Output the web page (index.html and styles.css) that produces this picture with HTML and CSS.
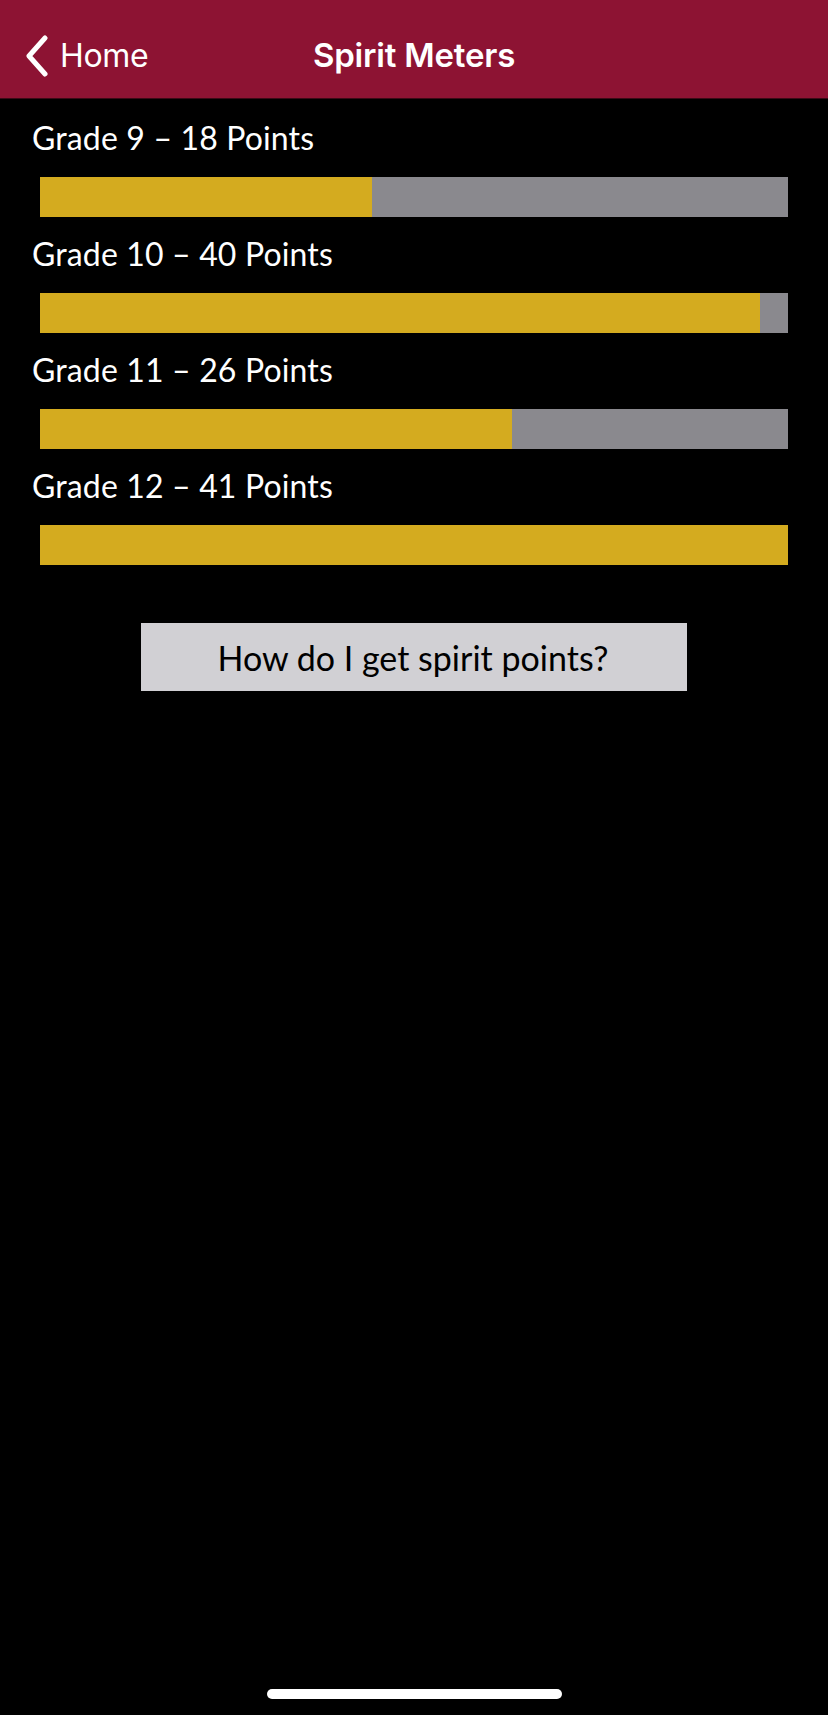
FILE: index.html
```html
<!DOCTYPE html>
<html>
<head>
<meta charset="utf-8">
<title>Spirit Meters</title>
<link rel="stylesheet" href="styles.css">
</head>
<body>
<div class="screen">
  <header class="navbar">
    <a class="back">
      <svg class="chev" width="26" height="42" viewBox="0 0 26 42"><path d="M21 3 L5 21 L21 39" fill="none" stroke="#fff" stroke-width="5" stroke-linecap="round" stroke-linejoin="round"/></svg>
      <span class="back-text">Home</span>
    </a>
    <h1 class="title">Spirit Meters</h1>
  </header>
  <main class="meters">
    <div class="meter">
      <div class="label">Grade 9 – 18 Points</div>
      <div class="bar"><div class="fill" style="width:44.4%"></div></div>
    </div>
    <div class="meter">
      <div class="label">Grade 10 – 40 Points</div>
      <div class="bar"><div class="fill" style="width:96.3%"></div></div>
    </div>
    <div class="meter">
      <div class="label">Grade 11 – 26 Points</div>
      <div class="bar"><div class="fill" style="width:63.1%"></div></div>
    </div>
    <div class="meter">
      <div class="label">Grade 12 – 41 Points</div>
      <div class="bar"><div class="fill" style="width:100%"></div></div>
    </div>
    <div class="actions">
      <button class="help">How do I get spirit points?</button>
    </div>
  </main>
  <div class="home-indicator"></div>
</div>
</body>
</html>
```
FILE: styles.css
```css
* { box-sizing: border-box; }
html, body { margin: 0; padding: 0; background: #000; }
body { width: 828px; height: 1715px; overflow: hidden; }
.screen {
  position: relative;
  width: 828px;
  height: 1715px;
  background: #000;
  display: flex;
  flex-direction: column;
}
.navbar {
  position: relative;
  height: 99px;
  background: #8d1333;
  border-bottom: 1px solid #3a0a16;
  display: flex;
  align-items: center;
  padding-top: 12px;
  flex-shrink: 0;
}
.back {
  display: flex;
  align-items: center;
  gap: 10px;
  padding-left: 24px;
  color: #fff;
}
.chev { display: block; margin-top: 2px; }
.back-text {
  font-family: Inter, "Liberation Sans", sans-serif;
  font-size: 32px;
  font-weight: 400;
  color: #fff;
  letter-spacing: -0.3px;
}
.title {
  position: absolute;
  left: 0;
  right: 0;
  top: 12px;
  bottom: 0;
  margin: 0;
  display: flex;
  align-items: center;
  justify-content: center;
  font-family: Inter, "Liberation Sans", sans-serif;
  font-size: 33px;
  font-weight: 600;
  color: #fff;
  letter-spacing: -0.2px;
  pointer-events: none;
}
.meters {
  padding-top: 19px;
  display: flex;
  flex-direction: column;
}
.meter {
  display: flex;
  flex-direction: column;
  margin-bottom: 17px;
}
.label {
  padding-left: 32px;
  font-family: Lato, "Open Sans", sans-serif;
  font-size: 32px;
  line-height: 40px;
  color: #fff;
  letter-spacing: 0.15px;
}
.bar {
  margin: 19px 40px 0 40px;
  height: 40px;
  background: #8a898e;
  display: flex;
}
.fill {
  height: 100%;
  background: #d4ab1f;
}
.actions {
  display: flex;
  justify-content: center;
  margin-top: 41px;
}
.help {
  width: 546px;
  height: 68px;
  border: 0;
  border-radius: 0;
  background: #d1d0d4;
  color: #000;
  font-family: Lato, "Open Sans", sans-serif;
  font-size: 34px;
  padding: 0;
  padding-right: 2px;
}
.home-indicator {
  position: absolute;
  left: 267px;
  top: 1689px;
  width: 295px;
  height: 10px;
  border-radius: 5px;
  background: #fff;
}
```
